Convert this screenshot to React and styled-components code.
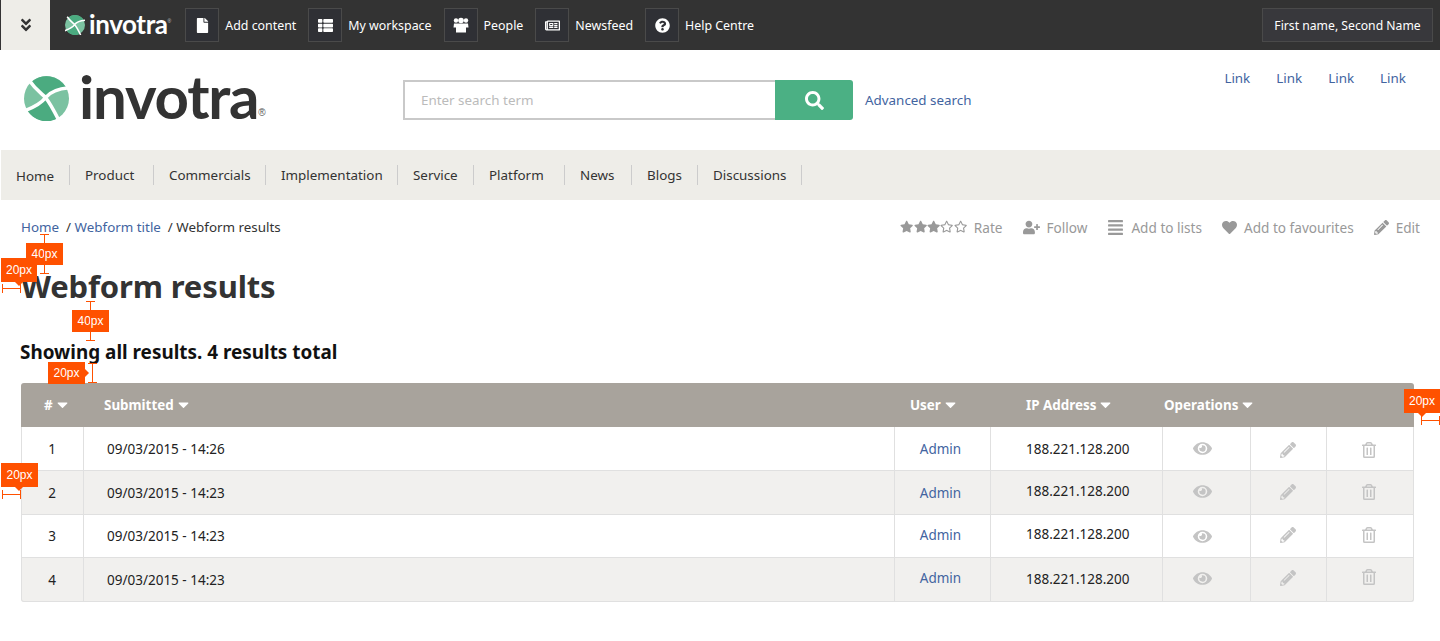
import styled, { createGlobalStyle } from 'styled-components';
import {
  FaAngleDoubleDown, FaFile, FaThList, FaRegNewspaper, FaQuestionCircle, FaSearch,
  FaStar, FaRegStar, FaUserPlus, FaAlignJustify, FaHeart, FaPencilAlt, FaEye, FaRegTrashAlt, FaCaretDown,
} from 'react-icons/fa';

const GlobalStyle = createGlobalStyle`
  html, body { margin: 0; padding: 0; background: #fff; }
  body { font-family: "Noto Sans", "Open Sans", sans-serif; font-size: 13.4px; color: #333; height: 641px; overflow: hidden; }
  a { text-decoration: none; color: #42649f; }
`;

const Page = styled.div`
  position: relative;
  width: 1440px;
  height: 641px;
  overflow: hidden;
`;

const Toolbar = styled.header`
  display: flex;
  align-items: center;
  height: 50px;
  background: #333;
  padding: 0 7px 0 1px;
`;

const Toggle = styled.button`
  width: 49px;
  height: 50px;
  border: 0;
  padding: 0;
  background: #eeede8;
  color: #333;
  font-size: 16px;
  display: flex;
  align-items: center;
  justify-content: center;
`;

const BarLogo = styled.div`
  display: flex;
  align-items: center;
  margin: 0 14px 0 15px;
  color: #fff;
`;

const LogoWord = styled.span`
  font-family: "Lato", sans-serif;
  font-weight: 700;
  font-size: ${p => p.$size}px;
  line-height: 1;
  letter-spacing: ${p => p.$spacing}px;
  margin-left: ${p => p.$gap}px;
  margin-top: ${p => p.$drop}px;
  color: ${p => p.$color};
`;

const Registered = styled.sup`
  font-family: "Liberation Sans", sans-serif;
  font-size: ${p => p.$size}px;
  color: ${p => p.$color};
  align-self: flex-end;
  margin-bottom: ${p => p.$drop}px;
  line-height: 1;
`;

const ToolItem = styled.a`
  display: flex;
  align-items: center;
  color: #fff;
  font-size: 12.4px;
  margin-right: 12px;
`;

const ToolIcon = styled.span`
  width: 34px;
  height: 34px;
  box-sizing: border-box;
  margin-right: 6px;
  border: 1px solid #4a4a4a;
  background: #2f3035;
  display: flex;
  align-items: center;
  justify-content: center;
  font-size: 15px;
`;

const UserBox = styled.div`
  margin-left: auto;
  width: 171px;
  height: 34px;
  box-sizing: border-box;
  border: 1px solid #4a4a4a;
  background: #38383c;
  display: flex;
  align-items: center;
  justify-content: center;
  color: #fff;
  font-size: 12.2px;
`;

const Masthead = styled.div`
  display: flex;
  height: 100px;
  padding-left: 24px;
`;

const MainLogo = styled.div`
  display: flex;
  align-items: center;
  width: 379px;
  height: 100px;
  padding-bottom: 4px;
  box-sizing: border-box;
`;

const SearchForm = styled.div`
  display: flex;
  align-items: center;
  margin: 30px 0 0 0;
  height: 40px;
`;

const SearchInput = styled.div`
  width: 372px;
  height: 40px;
  box-sizing: border-box;
  border: 2px solid #c9c9c9;
  border-right: 0;
  padding: 0 0 0 16px;
  display: flex;
  align-items: center;
  color: #bbb;
`;

const SearchButton = styled.button`
  width: 78px;
  height: 40px;
  border: 0;
  padding: 0;
  border-radius: 0 3px 3px 0;
  background: #4bb084;
  color: #fff;
  font-size: 19px;
  display: flex;
  align-items: center;
  justify-content: center;
`;

const AdvancedLink = styled.a`
  margin-left: 12px;
`;

const TopLinks = styled.nav`
  margin-left: auto;
  display: flex;
  gap: 26px;
  padding: 19px 34px 0 0;
`;

const NavBar = styled.nav`
  display: flex;
  align-items: center;
  height: 50px;
  margin-left: 1px;
  background: #eeede8;
`;

const NavItem = styled.a`
  height: 20px;
  display: flex;
  align-items: center;
  box-sizing: border-box;
  padding: ${p => (p.$home ? 2 : 0)}px 0 0 15px;
  width: ${p => p.$width}px;
  border-right: 1px solid #ccc;
  color: #333;
  white-space: nowrap;
`;

const Crumbs = styled.div`
  display: flex;
  align-items: center;
  justify-content: space-between;
  height: 20px;
  margin: 17px 20px 0 21px;
`;

const CrumbTrail = styled.div`
  color: #333;
  white-space: pre;
`;

const Actions = styled.div`
  display: flex;
  align-items: center;
  color: #999;
  font-size: 13.6px;
`;

const Action = styled.span`
  display: flex;
  align-items: center;
  margin-left: 20px;
  svg { margin-right: 7px; font-size: ${p => p.$icon || 15}px; }
`;

const Stars = styled.span`
  display: flex;
  margin-right: 7px;
  svg { margin: 0; font-size: 13.3px; }
`;

const Title = styled.h1`
  margin: 29px 0 0 21px;
  font-size: 31px;
  line-height: 40px;
  letter-spacing: -0.15px;
  font-weight: 700;
  color: #333;
`;

const Subtitle = styled.h2`
  margin: 34px 0 0 20px;
  font-size: 18.9px;
  line-height: 24px;
  font-weight: 700;
  color: #111;
`;

const Results = styled.table`
  margin: 19px 0 0 21px;
  width: 1393px;
  table-layout: fixed;
  border-collapse: separate;
  border-spacing: 0;
  font-size: 13.5px;
`;

const HeadCell = styled.th`
  height: 44px;
  padding: 0 0 0 ${p => p.$pad}px;
  background: #a8a39c;
  color: #fff;
  font-size: 13.4px;
  font-weight: 700;
  text-align: left;
  border-radius: ${p => p.$radius || '0'};
  svg { margin-left: 1px; font-size: 17px; vertical-align: -3px; }
`;

const Row = styled.tr`
  background: ${p => (p.$striped ? '#f1f0ee' : '#fff')};
`;

const Cell = styled.td`
  height: ${p => p.$height}px;
  box-sizing: border-box;
  padding: 0 ${p => p.$right || 0}px ${p => (p.$lift || 0) * 2}px ${p => p.$pad || 0}px;
  text-align: ${p => p.$align || 'left'};
  color: #222;
  border-bottom: 1px solid #e0e0e0;
  border-right: 1px solid #e0e0e0;
  border-left: ${p => (p.$first ? '1px solid #e0e0e0' : '0')};
  border-radius: ${p => p.$radius || '0'};
`;

const OpIcon = styled.span`
  color: #c4c4c4;
  font-size: ${p => p.$size}px;
  display: inline-flex;
  vertical-align: middle;
`;

const Tag = styled.span`
  position: absolute;
  left: ${p => p.$x}px;
  top: ${p => p.$y}px;
  width: ${p => p.$w}px;
  height: ${p => p.$h || 22}px;
  background: #ff5100;
  color: #fff;
  font-family: "Liberation Sans", sans-serif;
  font-size: 12px;
  line-height: ${p => p.$h || 22}px;
  text-align: center;

  &::after {
    content: '';
    display: ${p => (p.$tip ? 'block' : 'none')};
    position: absolute;
    ${p => (p.$tip === 'right'
      ? 'left: 100%; top: 7px; border: 4px solid transparent; border-left-color: #ff5100;'
      : 'top: 100%; left: 14px; border: 4px solid transparent; border-top-color: #ff5100;')}
  }
`;

const Rule = styled.span`
  position: absolute;
  left: ${p => p.$x}px;
  top: ${p => p.$y}px;
  width: ${p => (p.$vertical ? 1 : p.$len)}px;
  height: ${p => (p.$vertical ? p.$len : 1)}px;
  background: #ff5100;

  &::before, &::after {
    content: '';
    position: absolute;
    background: #ff5100;
    ${p => (p.$vertical
      ? 'left: -4px; width: 9px; height: 1px;'
      : 'top: -4px; width: 1px; height: 9px;')}
  }
  &::before { ${p => (p.$vertical ? 'top: 0;' : 'left: 0;')} }
  &::after { ${p => (p.$vertical ? 'bottom: 0;' : 'right: 0;')} }
`;

function LogoMark({ size }) {
  return (
    <svg width={size} height={size} viewBox="0 0 46 46">
      <circle cx="23" cy="23" r="23" fill="#7bc2a1" />
      <path d="M7 6.5 A23 23 0 0 1 43 12 C34 13 27 16 22 22 C18 18 12 14 7 6.5 Z" fill="#4bab80" />
      <path d="M3 34.5 A23 23 0 0 0 35 43 C31 36 27 28 22 22 C18 28 10 32 3 34.5 Z" fill="#4bab80" />
      <path d="M5 4 C12 14 18 18 22 22 C27 28 31 36 36 46 M0 36 C10 32 18 28 22 22 C27 16 34 13 46 12" fill="none" stroke="#fff" strokeWidth="3.6" />
    </svg>
  );
}

function PeopleIcon() {
  return (
    <svg width="16" height="16" viewBox="0 0 16 16" fill="currentColor">
      <circle cx="3" cy="3.5" r="2.2" />
      <circle cx="13" cy="3.5" r="2.2" />
      <circle cx="8" cy="3.5" r="2.8" />
      <path d="M1 6.5 H15 L15.5 10.5 H13 V15.5 H3 V10.5 H0.5 Z" />
    </svg>
  );
}

const tools = [
  { label: 'Add content', Icon: FaFile },
  { label: 'My workspace', Icon: FaThList },
  { label: 'People', Icon: PeopleIcon },
  { label: 'Newsfeed', Icon: FaRegNewspaper },
  { label: 'Help Centre', Icon: FaQuestionCircle },
];

const navItems = [
  ['Home', 69], ['Product', 84], ['Commercials', 112], ['Implementation', 132], ['Service', 76],
  ['Platform', 91], ['News', 67], ['Blogs', 66], ['Discussions', 104],
];

// the reference's cells sit a little off centre, row by row
const rows = [
  { id: 1, date: '09/03/2015 - 14:26', height: 44, admin: 0, ip: 0, eye: 0, pen: 0, bin: 0 },
  { id: 2, date: '09/03/2015 - 14:23', height: 44, admin: 0, ip: 2, eye: 1, pen: 2, bin: 2 },
  { id: 3, date: '09/03/2015 - 14:23', height: 43, admin: 1.5, ip: 2.5, eye: 0, pen: 2.5, bin: 2.5 },
  { id: 4, date: '09/03/2015 - 14:23', height: 44, admin: 2, ip: 1, eye: 1, pen: 3, bin: 4 },
];

export default function App() {
  return (
    <Page>
      <GlobalStyle />
      <Toolbar>
        <Toggle><FaAngleDoubleDown /></Toggle>
        <BarLogo>
          <LogoMark size={20} />
          <LogoWord $size={26} $spacing={-0.4} $gap={4} $drop={-2} $color="#fff">invotra</LogoWord>
          <Registered $size={5} $drop={13} $color="#ccc">®</Registered>
        </BarLogo>
        {tools.map(({ label, Icon }) => (
          <ToolItem key={label}>
            <ToolIcon><Icon /></ToolIcon>
            {label}
          </ToolItem>
        ))}
        <UserBox>First name, Second Name</UserBox>
      </Toolbar>

      <Masthead>
        <MainLogo>
          <LogoMark size={45} />
          <LogoWord $size={60} $spacing={-1.2} $gap={10} $drop={-4} $color="#333">invotra</LogoWord>
          <Registered $size={10} $drop={28} $color="#555">®</Registered>
        </MainLogo>
        <SearchForm>
          <SearchInput>Enter search term</SearchInput>
          <SearchButton><FaSearch /></SearchButton>
          <AdvancedLink>Advanced search</AdvancedLink>
        </SearchForm>
        <TopLinks>
          <a>Link</a><a>Link</a><a>Link</a><a>Link</a>
        </TopLinks>
      </Masthead>

      <NavBar>
        {navItems.map(([label, width], i) => (
          <NavItem key={label} $width={width} $home={i === 0}>{label}</NavItem>
        ))}
      </NavBar>

      <Crumbs>
        <CrumbTrail><a>Home</a>  / <a>Webform title</a>  / Webform results</CrumbTrail>
        <Actions>
          <Action>
            <Stars>
              <FaStar /><FaStar /><FaStar /><FaRegStar /><FaRegStar />
            </Stars>
            Rate
          </Action>
          <Action $icon={17}><FaUserPlus />Follow</Action>
          <Action $icon={17}><FaAlignJustify />Add to lists</Action>
          <Action><FaHeart />Add to favourites</Action>
          <Action><FaPencilAlt />Edit</Action>
        </Actions>
      </Crumbs>

      <Title>Webform results</Title>
      <Subtitle>Showing all results. 4 results total</Subtitle>

      <Results>
        <colgroup>
          <col width="63" /><col width="811" /><col width="96" /><col width="172" />
          <col width="88" /><col width="76" /><col width="87" />
        </colgroup>
        <thead>
          <tr>
            <HeadCell $pad={23} $radius="3px 0 0 0">#<FaCaretDown /></HeadCell>
            <HeadCell $pad={20}>Submitted<FaCaretDown /></HeadCell>
            <HeadCell $pad={15}>User<FaCaretDown /></HeadCell>
            <HeadCell $pad={35}>IP Address<FaCaretDown /></HeadCell>
            <HeadCell $pad={1} colSpan={3} $radius="0 3px 0 0">Operations<FaCaretDown /></HeadCell>
          </tr>
        </thead>
        <tbody>
          {rows.map((row, i) => {
            const last = i === rows.length - 1;
            const h = row.height;
            return (
              <Row key={row.id} $striped={i % 2 === 1}>
                <Cell $first $height={h} $align="center" $right={1} $radius={last ? '0 0 0 3px' : '0'}>{row.id}</Cell>
                <Cell $height={h} $pad={23}>{row.date}</Cell>
                <Cell $height={h} $align="center" $right={4} $lift={row.admin}><a>Admin</a></Cell>
                <Cell $height={h} $pad={35} $lift={row.ip}>188.221.128.200</Cell>
                <Cell $height={h} $align="center" $right={8} $lift={row.eye}><OpIcon $size={19}><FaEye /></OpIcon></Cell>
                <Cell $height={h} $align="center" $right={2} $lift={row.pen}><OpIcon $size={16}><FaPencilAlt /></OpIcon></Cell>
                <Cell $height={h} $align="center" $right={2} $lift={row.bin} $radius={last ? '0 0 3px 0' : '0'}><OpIcon $size={16}><FaRegTrashAlt /></OpIcon></Cell>
              </Row>
            );
          })}
        </tbody>
      </Results>

      <Tag $x={26} $y={243} $w={37}>40px</Tag>
      <Rule $vertical $x={44} $y={234} $len={40} />
      <Tag $x={1} $y={258} $w={36} $h={24} $tip="down">20px</Tag>
      <Rule $x={2} $y={288} $len={19} />
      <Tag $x={72} $y={310} $w={37}>40px</Tag>
      <Rule $vertical $x={90} $y={301} $len={40} />
      <Tag $x={48} $y={362} $w={37} $tip="right">20px</Tag>
      <Rule $vertical $x={92} $y={363} $len={20} />
      <Tag $x={1404} $y={389} $w={36} $h={24} $tip="down">20px</Tag>
      <Rule $x={1421} $y={420} $len={19} />
      <Tag $x={1} $y={463} $w={37} $h={24} $tip="down">20px</Tag>
      <Rule $x={2} $y={494} $len={19} />
    </Page>
  );
}
